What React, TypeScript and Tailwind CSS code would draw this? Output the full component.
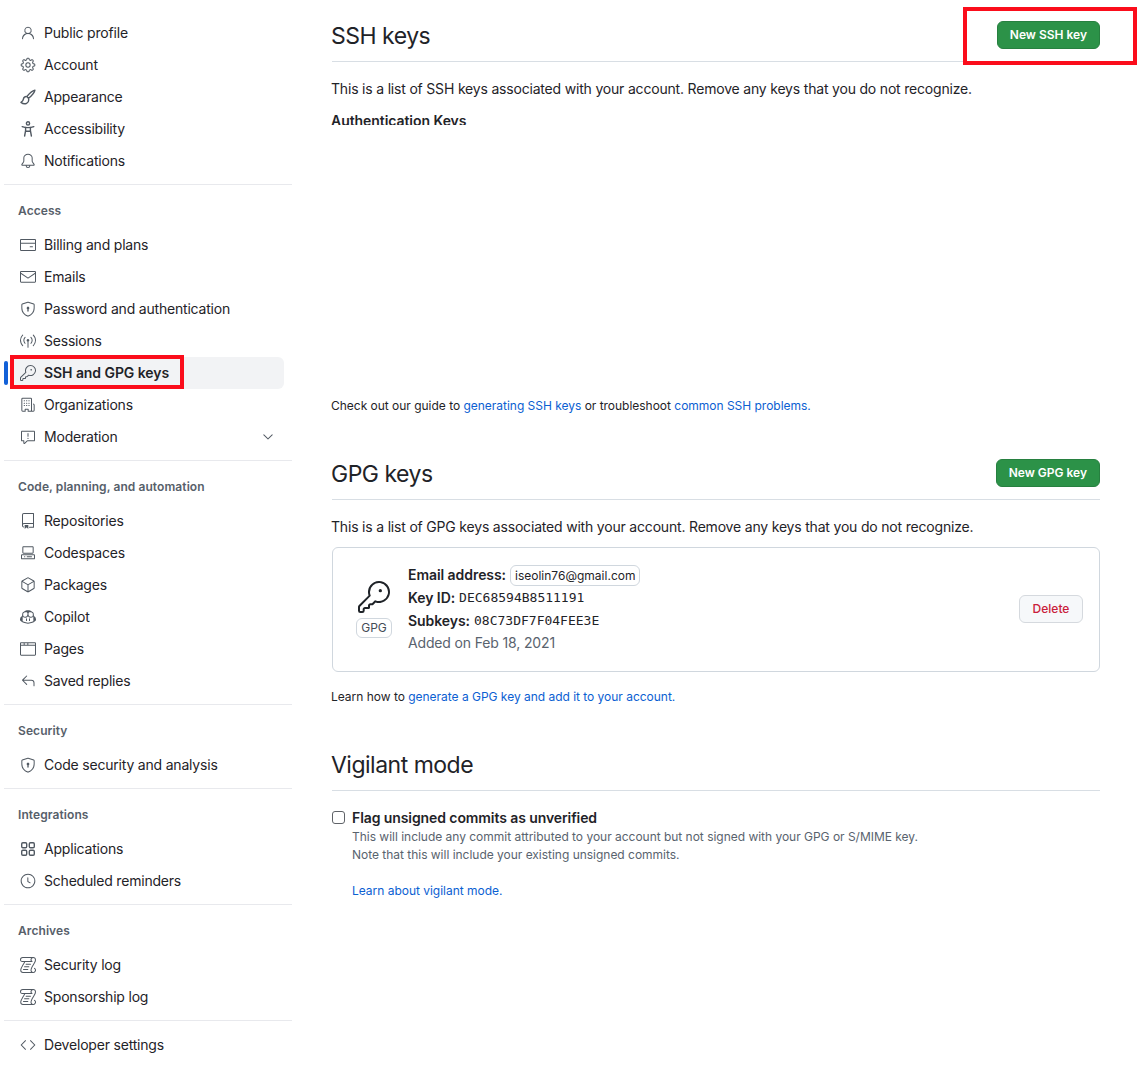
import React from "react";
import {
  GoPerson, GoGear, GoBell, GoCreditCard, GoMail, GoShieldLock,
  GoBroadcast, GoKey, GoOrganization, GoReport, GoChevronDown, GoRepo, GoCodespaces, GoPackage,
  GoCopilot, GoBrowser, GoReply, GoClock, GoLog, GoCode,
} from "react-icons/go";

type IconC = React.ComponentType<{ size?: number; className?: string }>;
type Item = { label: string; icon: IconC; active?: boolean; chevron?: boolean };
type Group = { title?: string; items: Item[] };

const Brush: IconC = ({ size = 16, className }) => (
  <svg width={size} height={size} viewBox="0 0 16 16" fill="none" stroke="currentColor" strokeWidth="1.4" strokeLinejoin="round" className={className}>
    <path d="M14.9 1.1C12.6 1.6 8.9 5 6.8 7.6l1.7 1.7c2.6-2.1 6-5.8 6.4-8.2Z" />
    <path d="M6.8 7.6C4.9 7.3 3.6 8.5 3.4 10.2c-.2 1.6-1 2.4-2.4 3.2 1.5 1.2 4 1.7 5.6.9 1.8-.9 2.4-3 1.9-5" />
  </svg>
);
const Access: IconC = ({ size = 16, className }) => (
  <svg width={size} height={size} viewBox="0 0 16 16" fill="none" stroke="currentColor" strokeWidth="1.4" strokeLinecap="round" strokeLinejoin="round" className={className}>
    <circle cx="8" cy="2.4" r="1.6" />
    <path d="M2.2 5.6c1.8.7 3.8 1 5.8 1s4-.3 5.8-1" />
    <path d="M5.6 6.5v3.2L4.6 15M10.4 6.5v3.2l1 5.3M5.4 10.2h5.2" />
  </svg>
);
const Apps: IconC = ({ size = 16, className }) => (
  <svg width={size} height={size} viewBox="0 0 16 16" fill="none" stroke="currentColor" strokeWidth="1.4" className={className}>
    <rect x="1.7" y="1.7" width="5" height="5" rx="1.2" />
    <rect x="9.3" y="1.7" width="5" height="5" rx="1.2" />
    <rect x="1.7" y="9.3" width="5" height="5" rx="1.2" />
    <rect x="9.3" y="9.3" width="5" height="5" rx="1.2" />
  </svg>
);

const groups: Group[] = [
  { items: [
    { label: "Public profile", icon: GoPerson },
    { label: "Account", icon: GoGear },
    { label: "Appearance", icon: Brush },
    { label: "Accessibility", icon: Access },
    { label: "Notifications", icon: GoBell },
  ]},
  { title: "Access", items: [
    { label: "Billing and plans", icon: GoCreditCard },
    { label: "Emails", icon: GoMail },
    { label: "Password and authentication", icon: GoShieldLock },
    { label: "Sessions", icon: GoBroadcast },
    { label: "SSH and GPG keys", icon: GoKey, active: true },
    { label: "Organizations", icon: GoOrganization },
    { label: "Moderation", icon: GoReport, chevron: true },
  ]},
  { title: "Code, planning, and automation", items: [
    { label: "Repositories", icon: GoRepo },
    { label: "Codespaces", icon: GoCodespaces },
    { label: "Packages", icon: GoPackage },
    { label: "Copilot", icon: GoCopilot },
    { label: "Pages", icon: GoBrowser },
    { label: "Saved replies", icon: GoReply },
  ]},
  { title: "Security", items: [{ label: "Code security and analysis", icon: GoShieldLock }] },
  { title: "Integrations", items: [
    { label: "Applications", icon: Apps },
    { label: "Scheduled reminders", icon: GoClock },
  ]},
  { title: "Archives", items: [
    { label: "Security log", icon: GoLog },
    { label: "Sponsorship log", icon: GoLog },
  ]},
  { items: [{ label: "Developer settings", icon: GoCode }] },
];

function NavRow({ item }: { item: Item }) {
  const Icon = item.icon;
  return (
    <div className={`relative mx-2 flex h-8 items-center rounded-md pl-2 pr-2 text-[14px] text-[#1f2328] ${item.active ? "bg-[#f2f3f5] font-semibold tracking-[-0.07px]" : "tracking-[-0.2px]"}`}>
      {item.active && <span className="absolute left-[-8px] top-1 h-6 w-1 rounded-md bg-[#1261d8]" />}
      <Icon size={16} className="mr-2 shrink-0 text-[#515962]" />
      <span className="-mt-[2px]">{item.label}</span>
      {item.chevron && <GoChevronDown size={16} className="ml-auto text-[#515962]" />}
    </div>
  );
}

function Sidebar() {
  return (
    <nav className="w-[288px] shrink-0">
      {groups.map((g, i) => (
        <div key={i}>
          {i > 0 && <div className="mb-2 mt-[7px] h-px bg-[#e8e9ed]" />}
          {g.title && (
            <div className="flex h-9 items-center px-[14px] text-[12px] font-semibold tracking-[0.08px] text-[#57606a]">{g.title}</div>
          )}
          {g.items.map((it) => <NavRow key={it.label} item={it} />)}
        </div>
      ))}
    </nav>
  );
}

function GreenButton({ children }: { children: React.ReactNode }) {
  return (
    <button className="flex h-7 items-center rounded-md border border-[#278040] bg-[#2c9248] px-3 text-[12px] font-semibold text-white">
      {children}
    </button>
  );
}

const link = "text-[#0b60d2]";
const mono = "mt-[2px] font-['DejaVu_Sans_Mono',monospace] text-[13px]";
const heading = "-ml-px text-[23px] font-normal leading-[30px] tracking-[-0.5px]";
const body = "-ml-px leading-[21px] tracking-[-0.19px]";
const small = "-ml-px text-[12px] leading-[18px] tracking-[-0.02px]";

function Main() {
  return (
    <main className="ml-10 w-[768px] text-[14px] text-[#1f2328]">
      <div className="flex h-[45px] items-start justify-between border-b border-[#d8dee4] pt-1">
        <h2 className={heading}>SSH keys</h2>
        <GreenButton>New SSH key</GreenButton>
      </div>
      <p className={`mt-4 ${body}`}>This is a list of SSH keys associated with your account. Remove any keys that you do not recognize.</p>
      <p className="-ml-px mt-[11px] h-[15px] overflow-hidden font-semibold leading-[21px] tracking-[-0.06px]">Authentication Keys</p>
      <p className={`mt-[272px] ${small}`}>
        Check out our guide to <span className={link}>generating SSH keys</span> or troubleshoot <span className={link}>common SSH problems.</span>
      </p>
      <div className="mt-[44px] flex h-[41px] items-start justify-between border-b border-[#d8dee4]">
        <h2 className={heading}>GPG keys</h2>
        <GreenButton>New GPG key</GreenButton>
      </div>
      <p className={`mt-4 ${body}`}>This is a list of GPG keys associated with your account. Remove any keys that you do not recognize.</p>
      <div className="mt-[10px] flex h-[125px] items-center rounded-md border border-[#d0d7de] pl-[23px] pr-4">
        <div className="flex w-[36px] shrink-0 flex-col items-center">
          <GoKey size={32} className="text-[#1f2328]" />
          <span className="mt-[5px] rounded-md border border-[#d0d7de] px-1 text-[12px] leading-[18px] text-[#444c56]">GPG</span>
        </div>
        <div className="ml-4 flex-1 pb-[3px]">
          <div className="flex h-[23px] items-center">
            <strong className="font-semibold tracking-[-0.06px]">Email address:</strong>
            <span className="ml-1 mt-[2px] rounded-md border border-[#d0d7de] px-1 text-[12px] leading-[19px]">iseolin76@gmail.com</span>
          </div>
          <div className="flex h-[23px] items-center">
            <strong className="font-semibold tracking-[-0.06px]">Key ID:</strong>
            <span className={`ml-1 ${mono}`}>DEC68594B8511191</span>
          </div>
          <div className="flex h-[23px] items-center">
            <strong className="font-semibold tracking-[-0.06px]">Subkeys:</strong>
            <span className={`ml-1 ${mono}`}>08C73DF7F04FEE3E</span>
          </div>
          <div className="flex h-[22px] items-center tracking-[-0.15px] text-[#59636e]">Added on Feb 18, 2021</div>
        </div>
        <button className="mb-[2px] flex h-7 w-16 items-center justify-center rounded-md border border-[#d5d9de] bg-[#f6f8fa] text-[12px] font-medium text-[#c9203a]">Delete</button>
      </div>
      <p className={`mt-4 ${small}`}>
        Learn how to <span className={link}>generate a GPG key and add it to your account.</span>
      </p>
      <div className="mt-[44px] h-[41px] border-b border-[#d8dee4]">
        <h2 className={heading}>Vigilant mode</h2>
      </div>
      <div className="mt-4 flex">
        <span className="mt-[4px] h-[13px] w-[13px] shrink-0 rounded-[3px] border border-[#5f6368] bg-white" />
        <div className="ml-[7px]">
          <div className="font-semibold leading-[21px] tracking-[-0.09px]">Flag unsigned commits as unverified</div>
          <div className="text-[12px] leading-[18px] tracking-[-0.02px] text-[#59636e]">
            <div>This will include any commit attributed to your account but not signed with your GPG or S/MIME key.</div>
            <div>Note that this will include your existing unsigned commits.</div>
            <div className={`mt-[18px] ${link}`}>Learn about vigilant mode.</div>
          </div>
        </div>
      </div>
    </main>
  );
}

export default function App() {
  return (
    <div className="relative flex h-[1091px] w-[1137px] overflow-hidden bg-white pl-1 pt-[17px] font-['Inter',sans-serif]">
      <Sidebar />
      <Main />
      <div className="absolute left-[10px] top-[355px] h-[34px] w-[174px] border-4 border-[#fb0d1b]" />
      <div className="absolute left-[963px] top-[7px] h-[58px] w-[174px] border-[4px] border-[#fb0d1b]" />
    </div>
  );
}
